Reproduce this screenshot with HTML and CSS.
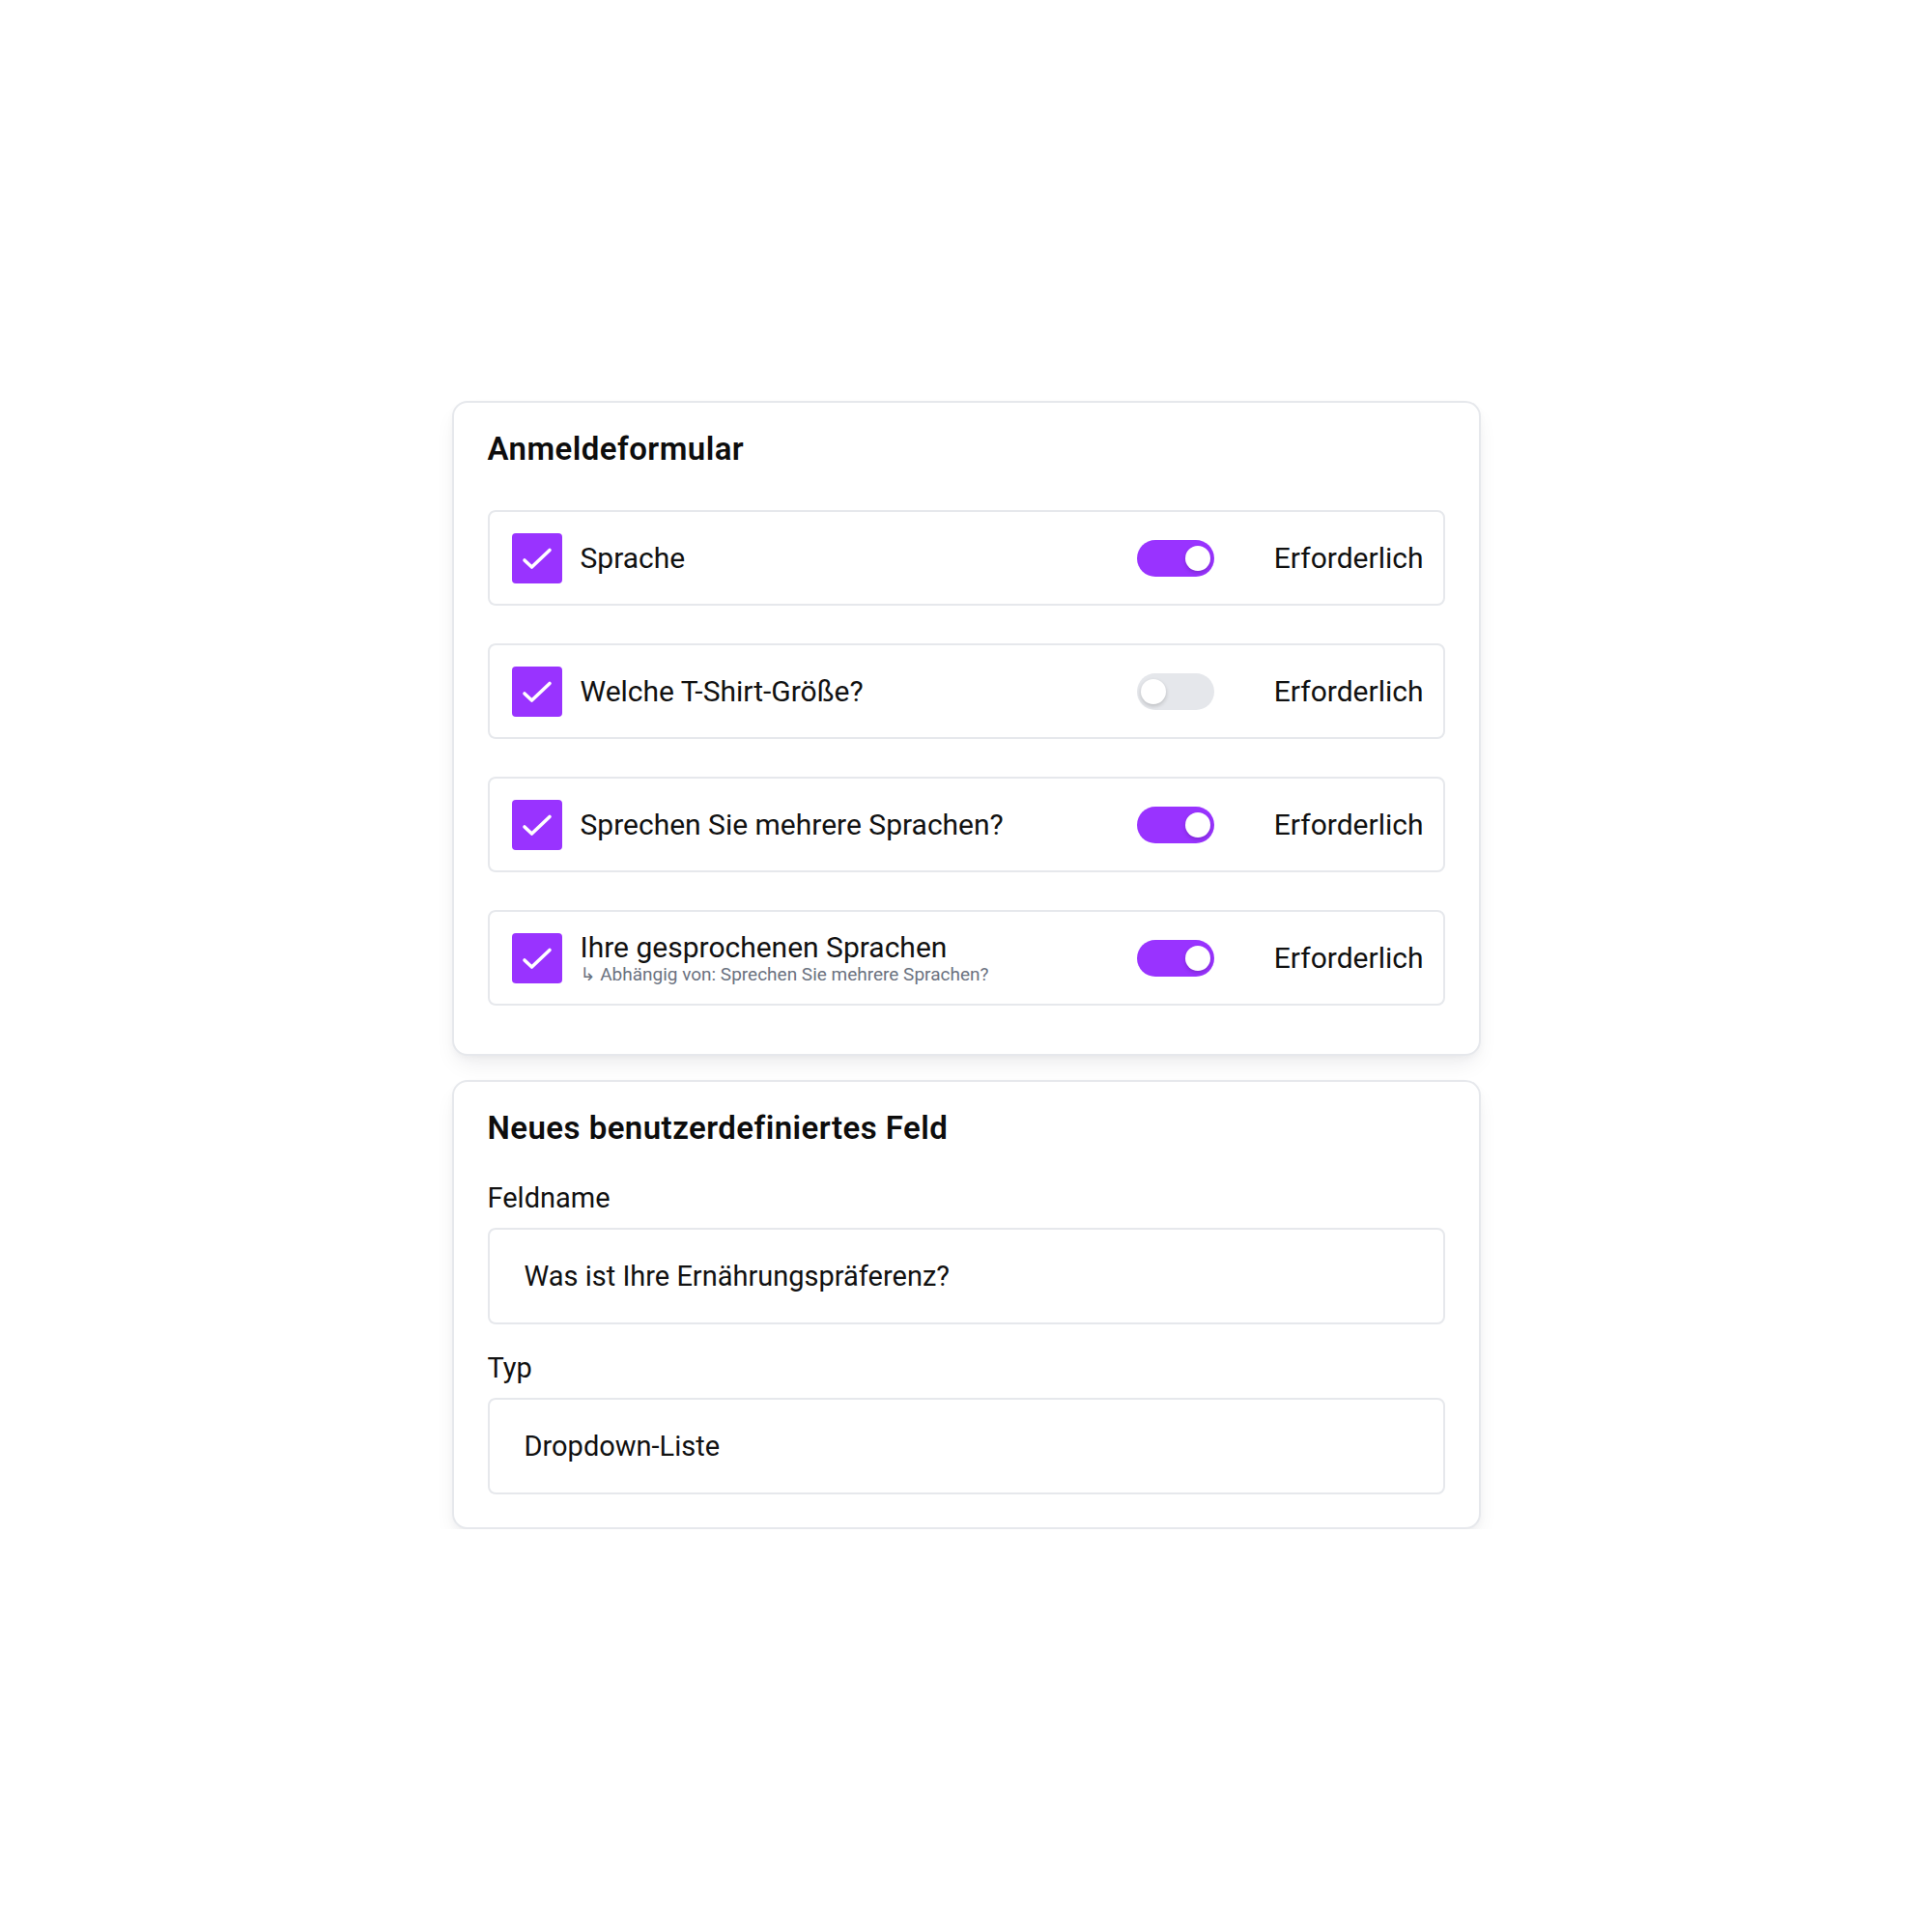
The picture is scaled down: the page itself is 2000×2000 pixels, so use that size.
FILE: index.html
```html
<!DOCTYPE html>
<html lang="de">
<head>
<meta charset="utf-8">
<title>Anmeldeformular</title>
<link rel="stylesheet" href="styles.css">
</head>
<body>
<main class="stack">
  <section class="card">
    <h2 class="card-title">Anmeldeformular</h2>
    <div class="rows">
      <div class="row">
        <span class="check"><svg viewBox="0 0 52 52"><path d="M13 28 L20.5 35 L39 17.5" /></svg></span>
        <div class="label"><div class="label-main">Sprache</div></div>
        <div class="right">
          <span class="toggle on"><span class="knob"></span></span>
          <span class="req">Erforderlich</span>
        </div>
      </div>
      <div class="row">
        <span class="check"><svg viewBox="0 0 52 52"><path d="M13 28 L20.5 35 L39 17.5" /></svg></span>
        <div class="label"><div class="label-main">Welche T-Shirt-Größe?</div></div>
        <div class="right">
          <span class="toggle"><span class="knob"></span></span>
          <span class="req">Erforderlich</span>
        </div>
      </div>
      <div class="row">
        <span class="check"><svg viewBox="0 0 52 52"><path d="M13 28 L20.5 35 L39 17.5" /></svg></span>
        <div class="label"><div class="label-main">Sprechen Sie mehrere Sprachen?</div></div>
        <div class="right">
          <span class="toggle on"><span class="knob"></span></span>
          <span class="req">Erforderlich</span>
        </div>
      </div>
      <div class="row">
        <span class="check"><svg viewBox="0 0 52 52"><path d="M13 28 L20.5 35 L39 17.5" /></svg></span>
        <div class="label">
          <div class="label-main">Ihre gesprochenen Sprachen</div>
          <div class="label-sub">↳ Abhängig von: Sprechen Sie mehrere Sprachen?</div>
        </div>
        <div class="right">
          <span class="toggle on"><span class="knob"></span></span>
          <span class="req">Erforderlich</span>
        </div>
      </div>
    </div>
  </section>

  <section class="card card-form">
    <h2 class="card-title">Neues benutzerdefiniertes Feld</h2>
    <div class="field first">
      <div class="field-label">Feldname</div>
      <div class="field-box">Was ist Ihre Ernährungspräferenz?</div>
    </div>
    <div class="field">
      <div class="field-label">Typ</div>
      <div class="field-box">Dropdown-Liste</div>
    </div>
  </section>
</main>
</body>
</html>
```

FILE: styles.css
```css
* { box-sizing: border-box; }

html, body {
  margin: 0;
  padding: 0;
  background: #ffffff;
}

body {
  font-family: Roboto, "Liberation Sans", "DejaVu Sans", sans-serif;
  color: #111111;
}

.stack {
  width: 1065px;
  margin: 415px auto 0;
  display: flex;
  flex-direction: column;
  gap: 25px;
}

.card {
  background: #ffffff;
  border: 2px solid #e6e8ec;
  border-radius: 16px;
  padding: 28px 35px 50px;
  box-shadow: 0 12px 24px -6px rgba(17, 24, 39, 0.09), 0 3px 8px -2px rgba(17, 24, 39, 0.05);
}

.card-form {
  padding-bottom: 34px;
}

.card-title {
  margin: 0;
  font-size: 33px;
  line-height: 40px;
  font-weight: 600;
  letter-spacing: 0.45px;
  color: #0d0d0d;
}

.rows {
  margin-top: 43px;
  display: flex;
  flex-direction: column;
  gap: 39px;
}

.row {
  height: 99px;
  border: 2px solid #e6e8ec;
  border-radius: 8px;
  padding: 0 20px 0 23px;
  display: flex;
  align-items: center;
}

.check {
  width: 52px;
  height: 52px;
  border-radius: 4px;
  background: #9933ff;
  flex: none;
  display: flex;
}

.check svg {
  width: 52px;
  height: 52px;
}

.check path {
  fill: none;
  stroke: #ffffff;
  stroke-width: 3.6;
  stroke-linecap: round;
  stroke-linejoin: round;
}

.label {
  margin-left: 19px;
  display: flex;
  flex-direction: column;
}

.label-main {
  font-size: 30px;
  line-height: 34px;
}

.label-sub {
  margin-top: 0;
  font-size: 19px;
  line-height: 22px;
  color: #6b7280;
}

.right {
  margin-left: auto;
  display: flex;
  align-items: center;
  gap: 62px;
}

.toggle {
  width: 80px;
  height: 38px;
  border-radius: 19px;
  background: #e5e7eb;
  display: flex;
  align-items: center;
  padding: 0 4px;
}

.toggle.on {
  background: #9933ff;
  justify-content: flex-end;
}

.knob {
  width: 26px;
  height: 26px;
  border-radius: 50%;
  background: #ffffff;
  box-shadow: 0 2px 4px rgba(0, 0, 0, 0.18);
}

.req {
  font-size: 30px;
  line-height: 34px;
}

.field.first {
  margin-top: 35px;
}

.field + .field {
  margin-top: 28px;
}

.field-label {
  font-size: 29px;
  line-height: 34px;
}

.field-box {
  margin-top: 14px;
  height: 100px;
  border: 2px solid #e6e8ec;
  border-radius: 8px;
  padding: 0 36px;
  display: flex;
  align-items: center;
  font-size: 29px;
  line-height: 34px;
}
```
